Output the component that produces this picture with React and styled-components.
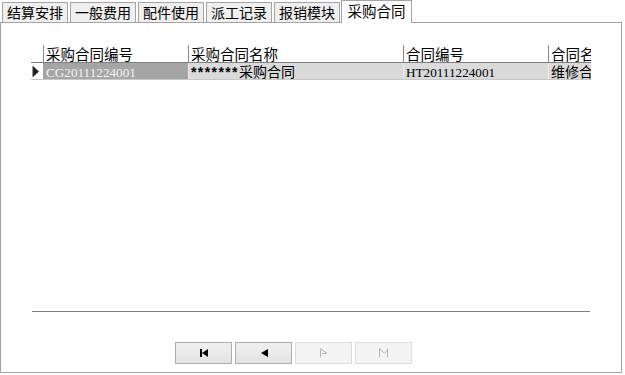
import React from "react";
import styled, { createGlobalStyle, css } from "styled-components";

const GlobalStyle = createGlobalStyle`
  * { box-sizing: border-box; }
  body {
    margin: 0;
    background: #fff;
    font-family: "Noto Sans CJK SC", "Liberation Sans", sans-serif;
    color: #000;
  }
`;

const Frame = styled.div`
  width: 625px;
  height: 375px;
  display: flex;
  flex-direction: column;
  background: #fff;
  overflow: hidden;
`;

const TabStrip = styled.div`
  height: 22px;
  display: flex;
  align-items: flex-end;
  gap: 2px;
  padding-left: 2px;
  position: relative;
  z-index: 1;
`;

const Tab = styled.div`
  width: 66px;
  height: 20px;
  border: 1px solid #a3a3a3;
  border-bottom: none;
  background: #efefef;
  font-size: 14px;
  line-height: 18px;
  text-align: center;
  white-space: nowrap;

  ${(p) =>
    p.$active &&
    css`
      width: 71px;
      height: 23px;
      margin-left: -1px;
      margin-bottom: -1px;
      background: #fff;
      font-size: 14.5px;
      line-height: 20px;
    `}
`;

const Panel = styled.div`
  width: 622px;
  height: 351px;
  border: 1px solid #a3a3a3;
  padding: 22px 0 0 30px;
  display: flex;
  flex-direction: column;
`;

const GridBox = styled.div`
  width: 560px;
  height: 266px;
  overflow: clip;
  background: #fff;
`;

const Row = styled.div`
  display: flex;
  height: 17px;
  width: max-content;
  ${(p) =>
    p.$data &&
    css`
      border-top: 1px solid #7f7f7f;
      border-bottom: 1px solid #c8c8c8;
      height: 18px;
    `}
`;

const Indicator = styled.div`
  width: 12px;
  display: flex;
  align-items: center;
  padding-left: 1px;
`;

const HeadCell = styled.div`
  width: ${(p) => p.$w}px;
  border-left: 1px solid #8a8a8a;
  padding-left: 2px;
  font-size: 14.5px;
  line-height: 17px;
  white-space: nowrap;
  overflow-x: clip;
  overflow-y: visible;
`;

const Cell = styled.div`
  width: ${(p) => p.$w}px;
  padding-left: 2px;
  white-space: nowrap;
  overflow-x: clip;
  overflow-y: visible;
  font-size: 14px;
  line-height: 16px;
  background: ${(p) => (p.$selected ? "#a5a5a5" : "#dadada")};
  color: ${(p) => (p.$selected ? "#f4f4f4" : "#000")};
  border-left: 1px solid ${(p) => (p.$selected ? "#a5a5a5" : "#ececec")};
`;

const Code = styled.span`
  font-family: "Liberation Serif", "Noto Sans CJK SC", serif;
  font-size: 13.2px;
`;

const Stars = styled.span`
  font-family: "Liberation Sans", sans-serif;
  font-size: 14px;
  font-weight: bold;
  letter-spacing: 1.4px;
`;

const Divider = styled.div`
  width: 558px;
  height: 1px;
  margin-left: 1px;
  background: #7f7f7f;
`;

const Pager = styled.div`
  display: flex;
  gap: 3px;
  margin-top: 30px;
  padding-left: 144px;
`;

const PagerButton = styled.div`
  width: 57px;
  height: 22px;
  display: flex;
  align-items: center;
  justify-content: center;
  border: 1px solid ${(p) => (p.$disabled ? "#dcdcdc" : "#adadad")};
  background: ${(p) =>
    p.$disabled ? "#f4f4f4" : "linear-gradient(#f0f0f0, #e3e3e3)"};
`;

const FirstIcon = () => (
  <svg width="8" height="8" viewBox="0 0 8 8">
    <rect x="0" y="0" width="2" height="8" fill="#000" />
    <polygon points="8,0 8,8 2,4" fill="#000" />
  </svg>
);

const PrevIcon = () => (
  <svg width="8" height="8" viewBox="0 0 8 8">
    <polygon points="8,0 8,8 1,4" fill="#000" />
  </svg>
);

const NextIcon = () => (
  <svg width="9" height="10" viewBox="0 0 9 10">
    <path
      d="M1.5 0.5 V9.5 M1.5 0.5 L8 5.5 L3 5.5"
      fill="none"
      stroke="#b4b4b4"
      strokeWidth="1"
    />
  </svg>
);

const LastIcon = () => (
  <svg width="11" height="10" viewBox="0 0 11 10">
    <path
      d="M1.5 0.5 V9.5 M1.5 0.5 L6.5 5.5 L9.5 2 M9.5 0.5 V9.5"
      fill="none"
      stroke="#b4b4b4"
      strokeWidth="1"
    />
  </svg>
);

const RowArrow = () => (
  <svg width="7" height="11" viewBox="0 0 7 11">
    <polygon points="1,0 7,5.5 1,11" fill="#222" />
    <line x1="0.5" y1="0" x2="0.5" y2="11" stroke="#999" />
  </svg>
);

const tabs = ["结算安排", "一般费用", "配件使用", "派工记录", "报销模块", "采购合同"];

const columns = [
  { title: "采购合同编号", w: 145 },
  { title: "采购合同名称", w: 215 },
  { title: "合同编号", w: 145 },
  { title: "合同名称", w: 145 },
];

export default function App() {
  return (
    <>
      <GlobalStyle />
      <Frame>
        <TabStrip>
          {tabs.map((t, i) => (
            <Tab key={t} $active={i === tabs.length - 1}>
              {t}
            </Tab>
          ))}
        </TabStrip>
        <Panel>
          <GridBox>
            <Row>
              <Indicator />
              {columns.map((c) => (
                <HeadCell key={c.title} $w={c.w}>
                  {c.title}
                </HeadCell>
              ))}
            </Row>
            <Row $data>
              <Indicator>
                <RowArrow />
              </Indicator>
              <Cell $w={145} $selected>
                <Code>CG20111224001</Code>
              </Cell>
              <Cell $w={215}>
                <Stars>*******</Stars>采购合同
              </Cell>
              <Cell $w={145}>
                <Code>HT20111224001</Code>
              </Cell>
              <Cell $w={145}>维修合同</Cell>
            </Row>
          </GridBox>
          <Divider />
          <Pager>
            <PagerButton>
              <FirstIcon />
            </PagerButton>
            <PagerButton>
              <PrevIcon />
            </PagerButton>
            <PagerButton $disabled>
              <NextIcon />
            </PagerButton>
            <PagerButton $disabled>
              <LastIcon />
            </PagerButton>
          </Pager>
        </Panel>
      </Frame>
    </>
  );
}
